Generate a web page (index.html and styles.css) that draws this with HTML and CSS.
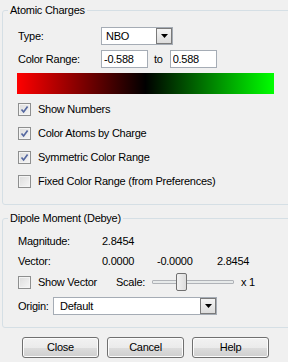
FILE: index.html
```html
<!DOCTYPE html>
<html lang="en">
<head>
    <meta charset="UTF-8">
    <title>Atomic Charges</title>
    <link rel="stylesheet" href="styles.css">
</head>
<body>
    <fieldset class="group charges">
        <legend>Atomic Charges</legend>
        <div class="row type-row">
            <span class="label">Type:</span>
            <div class="combo type-combo">
                <span class="combo-text">NBO</span>
                <span class="combo-btn"><svg width="7" height="4" viewBox="0 0 7 4"><path d="M0 0h7L3.5 4z" fill="#000"/></svg></span>
            </div>
        </div>
        <div class="row range-row">
            <span class="label">Color Range:</span>
            <input class="field" type="text" value="-0.588">
            <span class="to">to</span>
            <input class="field" type="text" value="0.588">
        </div>
        <div class="gradient"></div>
        <div class="checks">
            <div class="check"><span class="box"><svg width="9" height="9" viewBox="0 0 9 9"><path d="M1.5 4.5 L3.6 7 L7.6 1.6" fill="none" stroke="#5568a0" stroke-width="1.7"/></svg></span>Show Numbers</div>
            <div class="check"><span class="box"><svg width="9" height="9" viewBox="0 0 9 9"><path d="M1.5 4.5 L3.6 7 L7.6 1.6" fill="none" stroke="#5568a0" stroke-width="1.7"/></svg></span>Color Atoms by Charge</div>
            <div class="check"><span class="box"><svg width="9" height="9" viewBox="0 0 9 9"><path d="M1.5 4.5 L3.6 7 L7.6 1.6" fill="none" stroke="#5568a0" stroke-width="1.7"/></svg></span>Symmetric Color Range</div>
            <div class="check"><span class="box"></span>Fixed Color Range (from Preferences)</div>
        </div>
    </fieldset>

    <fieldset class="group dipole">
        <legend>Dipole Moment (Debye)</legend>
        <div class="stat-row magnitude">
            <span>Magnitude:</span>
            <span>2.8454</span>
        </div>
        <div class="stat-row">
            <span>Vector:</span>
            <span>0.0000</span>
            <span>-0.0000</span>
            <span>2.8454</span>
        </div>
        <div class="row vector-row">
            <div class="check show-vector"><span class="box"></span>Show Vector</div>
            <span class="scale-label">Scale:</span>
            <div class="slider">
                <div class="track"></div>
                <div class="thumb"></div>
            </div>
            <span class="scale-value">x 1</span>
        </div>
        <div class="row origin-row">
            <span class="origin-label">Origin:</span>
            <div class="combo origin-combo">
                <span class="combo-text">Default</span>
                <span class="combo-btn"><svg width="7" height="4" viewBox="0 0 7 4"><path d="M0 0h7L3.5 4z" fill="#000"/></svg></span>
            </div>
        </div>
    </fieldset>

    <div class="buttons">
        <button class="btn">Close</button>
        <button class="btn">Cancel</button>
        <button class="btn">Help</button>
    </div>
</body>
</html>
```

FILE: styles.css
```css
html, body {
    overflow: hidden;
}

body {
    margin: 0;
    width: 288px;
    height: 362px;
    background-color: #f0f0f0;
    font-family: 'Liberation Sans', Arial, sans-serif;
    font-size: 11px;
    line-height: 13px;
    letter-spacing: -0.25px;
    color: #000;
}

.group {
    margin: 0 -6px 0 2px;
    padding: 0 0 11px 15px;
    border: 1px solid #d5dfe5;
    border-radius: 3px;
    min-width: 0;
}

.group legend {
    margin-left: -10px;
    padding: 0 2px;
    line-height: 13px;
}

.charges {
    margin-top: 4px;
}

.dipole {
    margin-top: 7px;
    padding-bottom: 12px;
}

.row {
    display: flex;
    align-items: center;
    height: 18px;
}

.type-row {
    margin-top: 10px;
}

.range-row {
    margin-top: 5px;
}

.label {
    width: 83px;
}

.combo {
    display: flex;
    box-sizing: border-box;
    height: 18px;
    border: 1px solid #a5acb5;
    background-color: #fff;
}

.combo-text {
    flex: 1;
    line-height: 16px;
}

.combo-btn {
    display: flex;
    align-items: center;
    justify-content: center;
    box-sizing: border-box;
    width: 16px;
    border: 1px solid #7a7a7a;
    background: linear-gradient(#f4f4f4, #dcdcdc);
}

.type-combo {
    width: 72px;
}

.type-combo .combo-text {
    padding-left: 4px;
}

.field {
    box-sizing: border-box;
    width: 47px;
    height: 18px;
    margin: 0;
    padding: 0 0 0 2px;
    border: 1px solid #a5acb5;
    background-color: #fff;
    font: inherit;
    letter-spacing: inherit;
    color: #000;
}

.to {
    margin: 0 7px 0 6px;
}

.gradient {
    width: 257px;
    height: 21px;
    margin: 5px 0 0 -1px;
    background: linear-gradient(to right, #ff0000, #000000 50%, #00ff00);
}

.checks {
    margin-top: 3px;
}

.check {
    display: flex;
    align-items: center;
    gap: 7px;
    height: 24px;
}

.box {
    display: flex;
    align-items: center;
    justify-content: center;
    box-sizing: border-box;
    width: 13px;
    height: 13px;
    border: 1px solid #8e8f8f;
    background: linear-gradient(135deg, #dcdcdc, #f6f6f6);
    box-shadow: inset 0 0 0 1px #f4f4f4;
}

.stat-row {
    display: grid;
    grid-template-columns: 84px 55px 60px auto;
    align-items: center;
    height: 16px;
    margin-top: 4px;
}

.magnitude {
    margin-top: 8px;
}

.vector-row {
    margin-top: 4px;
}

.show-vector {
    width: 98px;
    height: 18px;
}

.scale-label {
    width: 36px;
}

.slider {
    position: relative;
    display: flex;
    align-items: center;
    width: 82px;
    height: 18px;
    margin-right: 7px;
}

.track {
    box-sizing: border-box;
    width: 100%;
    height: 4px;
    border: 1px solid #b0b3b8;
    border-radius: 1px;
    background-color: #e7eaea;
}

.thumb {
    position: absolute;
    left: 24px;
    top: 0;
    box-sizing: border-box;
    width: 11px;
    height: 18px;
    border: 1px solid #707070;
    border-radius: 2px;
    background: linear-gradient(to right, #f2f2f2, #dcdcdc);
}

.origin-row {
    margin-top: 6px;
}

.origin-label {
    width: 35px;
}

.origin-combo {
    width: 164px;
}

.origin-combo .combo-text {
    padding-left: 6px;
}

.buttons {
    display: flex;
    gap: 8px;
    margin-top: 9px;
    padding-left: 22px;
}

.btn {
    width: 77px;
    height: 21px;
    margin: 0;
    padding: 0;
    border: 1px solid #707070;
    border-radius: 3px;
    background: linear-gradient(#f2f2f2 0%, #ebebeb 50%, #dddddd 50%, #cfcfcf 100%);
    box-shadow: inset 0 0 0 1px #fcfcfc;
    font: inherit;
    letter-spacing: inherit;
    color: #000;
}
```
